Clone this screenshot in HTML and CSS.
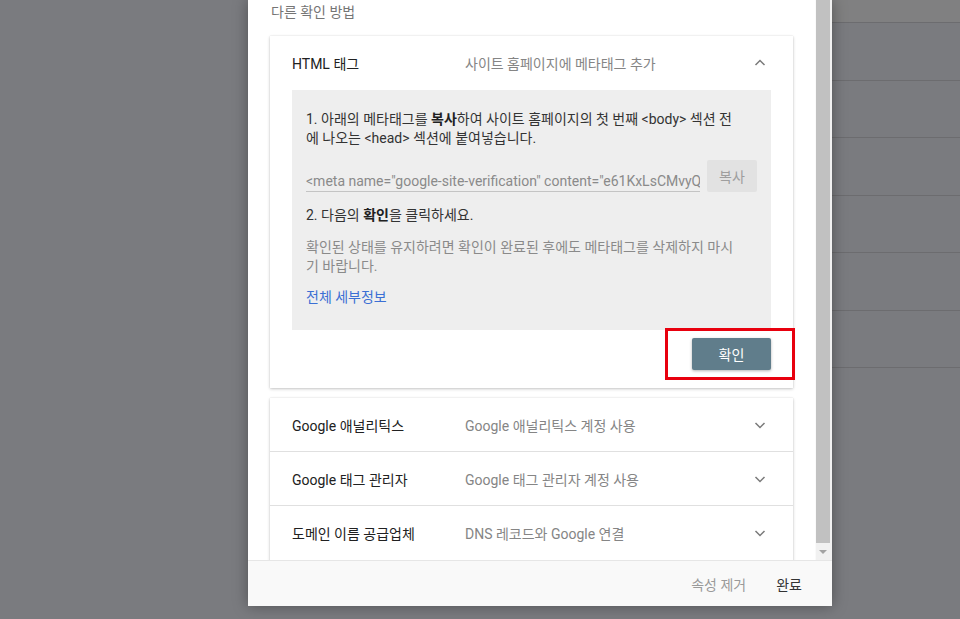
FILE: index.html
```html
<!DOCTYPE html>
<html lang="ko">
<head>
    <meta charset="UTF-8">
    <meta name="viewport" content="width=device-width, initial-scale=1.0">
    <title>소유권 확인</title>
    <link rel="stylesheet" href="styles.css">
</head>
<body>

<div class="backdrop">
    <div class="bg-side"></div>
    <div class="bg-main">
        <div class="bg-top"></div>
        <div class="bg-row"></div>
        <div class="bg-row"></div>
        <div class="bg-row"></div>
        <div class="bg-row"></div>
        <div class="bg-row"></div>
        <div class="bg-row"></div>
    </div>
</div>

<div class="dialog">
    <div class="dialog-body">
        <div class="scroll-content">
            <p class="section-label">다른 확인 방법</p>

            <div class="card">
                <div class="method-head">
                    <span class="method-title">HTML 태그</span>
                    <span class="method-desc">사이트 홈페이지에 메타태그 추가</span>
                    <svg class="chevron" width="12" height="8" viewBox="0 0 12 8"><path d="M1.5 6 L6 1.5 L10.5 6" /></svg>
                </div>
                <div class="method-panel">
                    <p class="step">1. 아래의 메타태그를 <strong>복사</strong>하여 사이트 홈페이지의 첫 번째 &lt;body&gt; 섹션 전<br>에 나오는 &lt;head&gt; 섹션에 붙여넣습니다.</p>
                    <div class="copy-row">
                        <input class="meta-input" type="text" readonly value='<meta name="google-site-verification" content="e61KxLsCMvyQ0pT3n8hW" />'>
                        <button class="copy-btn" type="button">복사</button>
                    </div>
                    <p class="step step-two">2. 다음의 <strong>확인</strong>을 클릭하세요.</p>
                    <p class="note">확인된 상태를 유지하려면 확인이 완료된 후에도 메타태그를 삭제하지 마시<br>기 바랍니다.</p>
                    <a class="details-link" href="#">전체 세부정보</a>
                </div>
                <div class="panel-actions">
                    <span class="btn-mark">
                        <button class="verify-btn" type="button">확인</button>
                    </span>
                </div>
            </div>

            <div class="card method-list">
                <div class="method-head">
                    <span class="method-title">Google 애널리틱스</span>
                    <span class="method-desc">Google 애널리틱스 계정 사용</span>
                    <svg class="chevron" width="12" height="8" viewBox="0 0 12 8"><path d="M1.5 2 L6 6.5 L10.5 2" /></svg>
                </div>
                <div class="method-head">
                    <span class="method-title">Google 태그 관리자</span>
                    <span class="method-desc">Google 태그 관리자 계정 사용</span>
                    <svg class="chevron" width="12" height="8" viewBox="0 0 12 8"><path d="M1.5 2 L6 6.5 L10.5 2" /></svg>
                </div>
                <div class="method-head">
                    <span class="method-title">도메인 이름 공급업체</span>
                    <span class="method-desc">DNS 레코드와 Google 연결</span>
                    <svg class="chevron" width="12" height="8" viewBox="0 0 12 8"><path d="M1.5 2 L6 6.5 L10.5 2" /></svg>
                </div>
            </div>
        </div>

        <div class="scrollbar">
            <div class="scroll-thumb"></div>
            <div class="scroll-arrow"></div>
        </div>
    </div>

    <div class="dialog-footer">
        <button class="text-btn muted" type="button">속성 제거</button>
        <button class="text-btn" type="button">완료</button>
    </div>
</div>

</body>
</html>
```

FILE: styles.css
```css
* {
    box-sizing: border-box;
}
body {
    margin: 0;
    height: 619px;
    overflow: hidden;
    background: #7a7b7f;
    font-family: Roboto, "Noto Sans CJK KR", sans-serif;
    font-size: 14px;
    color: #212121;
}
p {
    margin: 0;
}
button {
    font-family: inherit;
    cursor: pointer;
}

/* page behind the scrim */
.backdrop {
    display: flex;
    height: 619px;
}
.bg-side {
    width: 300px;
}
.bg-main {
    flex: 1;
}
.bg-top {
    height: 23px;
    background: #808081;
    border-bottom: 1px solid #6c6c6f;
}
.bg-row {
    height: 57.5px;
    border-bottom: 1px solid #6c6c6f;
}

/* dialog */
.dialog {
    position: absolute;
    left: 248px;
    top: 0;
    width: 584px;
    height: 606px;
    background: #fff;
    box-shadow: 0 0 14px rgba(0, 0, 0, 0.35);
    display: flex;
    flex-direction: column;
}
.dialog-body {
    display: flex;
    height: 560px;
    overflow: hidden;
}
.scroll-content {
    flex: 1;
    padding: 2px 22px 0 22px;
}
.section-label {
    line-height: 20px;
    color: #757575;
    margin-left: 1px;
}
.card {
    background: #fff;
    margin-top: 14px;
    box-shadow: 0 1px 3px rgba(0, 0, 0, 0.22), 0 0 1px rgba(0, 0, 0, 0.12);
}
.method-list {
    margin-top: 10px;
    padding-bottom: 40px;
}
.method-head {
    display: flex;
    align-items: center;
    height: 54px;
    padding: 0 27px 0 22px;
}
.method-list .method-head {
    border-bottom: 1px solid #e0e0e0;
}
.method-list .method-head:last-child {
    border-bottom: none;
}
.method-title {
    width: 173px;
    color: #212121;
}
.method-desc {
    flex: 1;
    color: #858585;
}
.chevron path {
    fill: none;
    stroke: #7a7a7a;
    stroke-width: 1.5;
}

.method-panel {
    margin: 0 22px;
    padding: 20px 14px 23px 14px;
    background: #eeeeee;
    line-height: 19px;
}
.step {
    color: #333;
}
.step strong {
    font-weight: 700;
    color: #212121;
}
.copy-row {
    display: flex;
    align-items: flex-end;
    gap: 7px;
    margin-top: 12px;
    height: 32px;
}
.meta-input {
    flex: 1;
    min-width: 0;
    height: 22px;
    padding: 0;
    border: none;
    border-bottom: 1px solid #c4c4c4;
    background: transparent;
    font-family: inherit;
    font-size: 14px;
    color: #8a8a8a;
    outline: none;
}
.copy-btn {
    align-self: stretch;
    width: 50px;
    border: none;
    border-radius: 2px;
    background: #e2e2e2;
    color: #9e9e9e;
    font-size: 14px;
    padding: 0;
}
.step-two {
    margin-top: 14px;
}
.note {
    margin-top: 13px;
    color: #8a8a8a;
}
.details-link {
    display: inline-block;
    margin-top: 12px;
    color: #3b6fd4;
    text-decoration: none;
}

.panel-actions {
    display: flex;
    justify-content: flex-end;
    padding: 8px 22px 18px 0;
}
.btn-mark {
    position: relative;
    display: flex;
}
.btn-mark::after {
    content: "";
    position: absolute;
    top: -10px;
    bottom: -10px;
    left: -27px;
    right: -24px;
    border: 3px solid #e8000e;
    pointer-events: none;
}
.verify-btn {
    width: 79px;
    height: 32px;
    border: none;
    border-radius: 2px;
    background: #607d8b;
    color: #fff;
    font-size: 14px;
    box-shadow: 0 1px 3px rgba(0, 0, 0, 0.3);
}

/* fake classic scrollbar */
.scrollbar {
    width: 17px;
    display: flex;
    flex-direction: column;
    background: #f1f1f1;
    border-left: 1px solid #fafafa;
    padding-right: 2px;
}
.scroll-thumb {
    flex: 1;
    background: #c1c1c1;
}
.scroll-arrow {
    height: 17px;
    display: flex;
    align-items: center;
    justify-content: center;
}
.scroll-arrow::before {
    content: "";
    border-left: 4px solid transparent;
    border-right: 4px solid transparent;
    border-top: 4px solid #a3a3a3;
}

.dialog-footer {
    flex: 1;
    display: flex;
    align-items: center;
    justify-content: flex-end;
    gap: 14px;
    padding-right: 22px;
    background: #f9f9f9;
    border-top: 1px solid #e6e6e6;
}
.text-btn {
    border: none;
    background: none;
    padding: 6px 8px;
    font-size: 14px;
    color: #333;
}
.text-btn.muted {
    color: #9a9a9a;
}
```
